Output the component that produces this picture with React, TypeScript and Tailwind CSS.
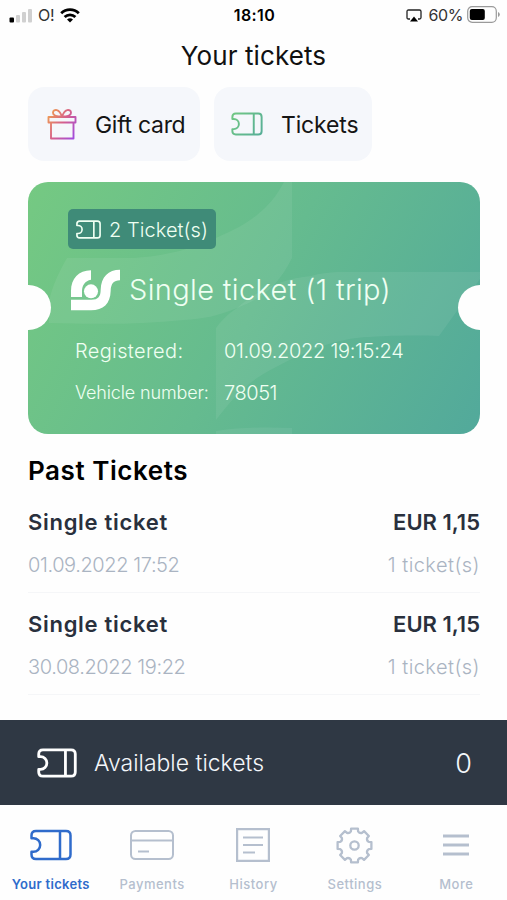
import React from 'react';

interface IconProps {
  className?: string;
  stroke?: string;
  strokeWidth?: number;
}

interface PastTicket {
  name: string;
  date: string;
  price: string;
  count: string;
}

const pastTickets: PastTicket[] = [
  { name: 'Single ticket', date: '01.09.2022 17:52', price: 'EUR 1,15', count: '1 ticket(s)' },
  { name: 'Single ticket', date: '30.08.2022 19:22', price: 'EUR 1,15', count: '1 ticket(s)' },
];

// Ticket stub outline with a bite on the left side
const TicketIcon: React.FC<IconProps> = ({ className, stroke = 'currentColor', strokeWidth = 2.6 }) => (
  <svg className={className} viewBox="0 0 42 32" fill="none" stroke={stroke} strokeWidth={strokeWidth} strokeLinejoin="round">
    <path d="M6 2H36Q40.5 2 40.5 6.5V25.5Q40.5 30 36 30H6Q1.5 30 1.5 25.5V22.8H3.4A6.8 6.8 0 0 0 3.4 9.2H1.5V6.5Q1.5 2 6 2Z" />
    <path d="M30 2V30" />
  </svg>
);

const GiftIcon = () => (
  <svg className="h-8 w-7.5" viewBox="0 0 30 32" fill="none" stroke="url(#gift)" strokeWidth="1.9" strokeLinejoin="round">
    <defs>
      <linearGradient id="gift" x1="0" y1="6" x2="30" y2="26" gradientUnits="userSpaceOnUse">
        <stop offset="0" stopColor="#f0a050" />
        <stop offset="0.5" stopColor="#d55f8c" />
        <stop offset="1" stopColor="#a04be0" />
      </linearGradient>
    </defs>
    <path d="M1.5 9H28.5V14.5H1.5Z" />
    <path d="M4 14.5V30.5H26.5V14.5" />
    <path d="M15 8.5C12 8.5 6 8 6 4.7C6 2.5 8 1.5 10 2.2C12.5 3 14 6 15 8.5ZM15 8.5C18 8.5 24 8 24 4.7C24 2.5 22 1.5 20 2.2C17.5 3 16 6 15 8.5Z" />
  </svg>
);

const StatusBar = () => (
  <header className="flex h-[30px] items-center pl-[9px] pr-[7px] text-black">
    <div className="flex flex-1 items-center">
      <svg className="h-[15px] w-[23px]" viewBox="0 0 23 15">
        <rect x="0.5" y="9.5" width="4.5" height="5" rx="1" fill="#000" />
        <rect x="7" y="7" width="4" height="7.5" rx="1" fill="#d0d0d0" />
        <rect x="13" y="4" width="4" height="10.5" rx="1" fill="#d0d0d0" />
        <rect x="19" y="1" width="4" height="13.5" rx="1" fill="#d0d0d0" />
      </svg>
      <span className="ml-[6px] text-base tracking-[-0.3px] text-[#333]">O!</span>
      <svg className="ml-[6px] h-[15px] w-5" viewBox="0 0 20 15" fill="none" stroke="#000" strokeWidth="2.8">
        <path d="M1.2 5.2A12.5 12.5 0 0 1 18.8 5.2" />
        <path d="M4.6 9A7.8 7.8 0 0 1 15.4 9" />
        <path d="M10 14.5L7 11.6A4.4 4.4 0 0 1 13 11.6Z" fill="#000" stroke="none" />
      </svg>
    </div>
    <span className="text-base font-semibold tracking-[0.4px]">18:10</span>
    <div className="flex flex-1 items-center justify-end">
      <svg className="h-[13px] w-4" viewBox="0 0 16 13" fill="none" stroke="#222" strokeWidth="1.3">
        <path d="M4 10H2.5Q1 10 1 8.5V2.5Q1 1 2.5 1H13.5Q15 1 15 2.5V8.5Q15 10 13.5 10H12" />
        <path d="M8 7.6L12 12.6H4Z" fill="#000" stroke="none" />
      </svg>
      <span className="ml-[6px] text-base tracking-[-0.4px] text-[#333]">60%</span>
      <svg className="ml-1 h-[17px] w-[33px] -translate-y-px" viewBox="0 0 33 17">
        <rect x="0.7" y="0.7" width="28.6" height="15.6" rx="4.5" fill="none" stroke="#9a9a9a" strokeWidth="1.2" />
        <rect x="2.8" y="3" width="15" height="11" rx="2" fill="#000" />
        <path d="M31 6V11Q32.8 10.2 32.8 8.5T31 6Z" fill="#9a9a9a" />
      </svg>
    </div>
  </header>
);

const CompanyLogo = () => (
  <svg className="h-[42px] w-[50px]" viewBox="12 18 150 126" fill="#fff">
    <path d="M15 102V84C15 46 38 23 75 22V50C57 54 48 66 48 84V102Z" />
    <circle cx="75" cy="85" r="21" />
    <path d="M15 110H76C97 110 104 100 104 80C105 42 127 20 162 20V52C143 52 135 62 134 84C133 122 112 142 75 142H15Z" />
  </svg>
);

const ActiveTicket = () => (
  <section className="relative ml-7 mr-[27px] mt-[21px] h-[252px] overflow-hidden rounded-[20px] bg-[linear-gradient(119deg,#75c982_0%,#65bb8f_50%,#52a99b_100%)] text-[#effff2]">
    {/* faded logo shapes in the background */}
    <svg className="absolute inset-0 h-full w-full" viewBox="0 0 452 252" fill="#fff" fillOpacity="0.065">
      <path d="M264 0V76C250 104 235 116 209 126C190 134 175 137 156 138C110 143 60 142 21 141V120C24 104 32 88 39 76H106C140 74 165 66 188 56C206 48 218 42 229 33C240 24 248 15 256 0Z" />
      <path d="M188 238V146C194 138 200 132 209 126C232 106 255 97 283 94C293 91 305 90 313 90H452V97L411 154C380 153 350 154 329 156C312 158 298 162 283 169C260 178 245 186 229 196C212 208 200 222 188 238Z" />
      <path d="M188 252V249C215 245 240 245 264 246V252Z" />
    </svg>
    <div className="absolute -left-[22px] top-[103px] size-[45px] rounded-full bg-[#fefefe]" />
    <div className="absolute -right-[23px] top-[103px] size-[45px] rounded-full bg-[#fefefe]" />
    <div className="relative px-10 pt-[27px]">
      <div className="flex h-10 w-[148px] items-center rounded-[5px] bg-[#3f8b78] pl-2">
        <TicketIcon className="h-[19px] w-[25px]" strokeWidth={2.8} />
        <span className="ml-2 whitespace-nowrap pt-px text-[20px] font-light tracking-[0.05px]">2 Ticket(s)</span>
      </div>
      <div className="mt-[19px] flex h-[44px] items-center pl-[2px]">
        <CompanyLogo />
        <h2 className="ml-[9px] whitespace-nowrap text-[29px] font-[350] tracking-[0.35px]">Single ticket (1 trip)</h2>
      </div>
      <dl className="mt-[24px] grid grid-cols-[149px_1fr] gap-y-[12px] whitespace-nowrap pl-[7px] leading-[30px]">
        <dt className="text-[20px] font-[350] tracking-[0.35px]">Registered:</dt>
        <dd className="text-[20px] font-[350] tracking-[-0.3px]">01.09.2022 19:15:24</dd>
        <dt className="text-[18px] font-[350] tracking-[-0.15px]">Vehicle number:</dt>
        <dd className="text-[20px] font-[350] tracking-[-0.45px]">78051</dd>
      </dl>
    </div>
  </section>
);

const BottomNav = () => (
  <nav className="grid h-[95px] grid-cols-5 text-[13px] font-medium tracking-[0.5px] text-[#b5bfce]">
    <div className="flex flex-col items-center">
      <div className="flex h-[80px] items-center"><TicketIcon className="h-8 w-[42px] text-[#2f6bcb]" strokeWidth={2.5} /></div>
      <span className="-mt-[10px] whitespace-nowrap font-semibold tracking-[0.3px] text-[#2f6bcb]">Your tickets</span>
    </div>
    <div className="flex flex-col items-center">
      <div className="flex h-[80px] items-center">
        <svg className="h-[30px] w-11" viewBox="0 0 44 30" fill="none" stroke="currentColor" strokeWidth="2">
          <rect x="1" y="1" width="42" height="28" rx="4.5" />
          <path d="M1 10.5H43M8 21.5H19" />
        </svg>
      </div>
      <span className="-mt-[10px]">Payments</span>
    </div>
    <div className="flex flex-col items-center">
      <div className="flex h-[80px] items-center">
        <svg className="h-[34px] w-[34px]" viewBox="0 0 34 34" fill="none" stroke="currentColor" strokeWidth="2.2">
          <path d="M1.1 1.1H32.9V32.9H1.1ZM7 9.5H27M7 17H27M7 24.5H19" />
        </svg>
      </div>
      <span className="-mt-[10px]">History</span>
    </div>
    <div className="flex flex-col items-center">
      <div className="flex h-[80px] items-center">
        <svg className="h-[37px] w-[37px]" viewBox="-18.5 -18.5 37 37" fill="none" stroke="currentColor" strokeWidth="2.3" strokeLinejoin="round">
          <path d="M-3.4 -16.9H3.4L3.6 -14.2Q5 -12 7.5 -12.6L9.55 -14.35L14.35 -9.55L12.6 -7.5Q12 -5 14.2 -3.6L16.9 -3.4V3.4L14.2 3.6Q12 5 12.6 7.5L14.35 9.55L9.55 14.35L7.5 12.6Q5 12 3.6 14.2L3.4 16.9H-3.4L-3.6 14.2Q-5 12 -7.5 12.6L-9.55 14.35L-14.35 9.55L-12.6 7.5Q-12 5 -14.2 3.6L-16.9 3.4V-3.4L-14.2 -3.6Q-12 -5 -12.6 -7.5L-14.35 -9.55L-9.55 -14.35L-7.5 -12.6Q-5 -12 -3.6 -14.2Z" />
          <circle r="4.2" />
        </svg>
      </div>
      <span className="-mt-[10px]">Settings</span>
    </div>
    <div className="flex flex-col items-center">
      <div className="flex h-[80px] items-center">
        <svg className="h-6 w-[26px]" viewBox="0 0 26 24" fill="none" stroke="currentColor" strokeWidth="3">
          <path d="M0 3H26M0 12H26M0 21H26" />
        </svg>
      </div>
      <span className="-mt-[10px]">More</span>
    </div>
  </nav>
);

export default function App() {
  return (
    <div className="flex h-[900px] w-[507px] flex-col overflow-hidden bg-[#fefefe] font-['Inter',sans-serif]">
      <svg className="absolute h-0 w-0">
        <defs>
          <linearGradient id="green" x1="0" y1="0" x2="42" y2="32" gradientUnits="userSpaceOnUse">
            <stop offset="0" stopColor="#72c882" />
            <stop offset="1" stopColor="#55ad98" />
          </linearGradient>
        </defs>
      </svg>
      <StatusBar />
      <h1 className="mt-[8px] h-9 text-center text-[26px] leading-9 tracking-[0.1px] text-[#111]">Your tickets</h1>
      <div className="mt-[13px] flex gap-3.5 pl-7">
        <button className="flex h-[74px] w-[172px] items-center whitespace-nowrap rounded-2xl bg-[#f5f7fb] pl-[19px] text-[23px] text-[#151515]">
          <GiftIcon />
          <span className="ml-[18px] pt-0.5 tracking-[-0.3px]">Gift card</span>
        </button>
        <button className="flex h-[74px] w-[158px] items-center whitespace-nowrap rounded-2xl bg-[#f5f7fb] pl-[17px] text-[23px] text-[#151515]">
          <TicketIcon className="h-6 w-8" stroke="url(#green)" />
          <span className="ml-[18px] pt-0.5 tracking-[-0.15px]">Tickets</span>
        </button>
      </div>
      <ActiveTicket />

      <main className="pl-7 pr-[27px] pt-[19px]">
        <h2 className="h-[38px] text-[26px] font-semibold leading-9 tracking-[0.55px] text-black">Past Tickets</h2>
        {pastTickets.map((ticket) => (
          <div key={ticket.date} className="h-[102px] border-b border-[#f5f6f8] pt-[14px]">
            <div className="flex justify-between text-[22px] font-semibold leading-[34px] text-[#29303d]">
              <span className="tracking-[0.7px]">{ticket.name}</span>
              <span>{ticket.price}</span>
            </div>
            <div className="mt-[10px] flex justify-between text-[20px] font-light leading-8 text-[#aab4c2]">
              <span className="tracking-[-0.4px]">{ticket.date}</span>
              <span className="tracking-[0.45px]">{ticket.count}</span>
            </div>
          </div>
        ))}
      </main>

      <footer className="mt-auto">
        <div className="flex h-[85px] items-center bg-[#2f3844] pl-[37px] pr-[35px] text-[23px] font-light text-[#f3f6fa]">
          <TicketIcon className="h-[30px] w-10 text-white" strokeWidth={3} />
          <span className="ml-[17px] flex-1 pt-0.5">Available tickets</span>
          <span className="pt-1 text-[27px]">0</span>
        </div>
        <BottomNav />
      </footer>
    </div>
  );
}
